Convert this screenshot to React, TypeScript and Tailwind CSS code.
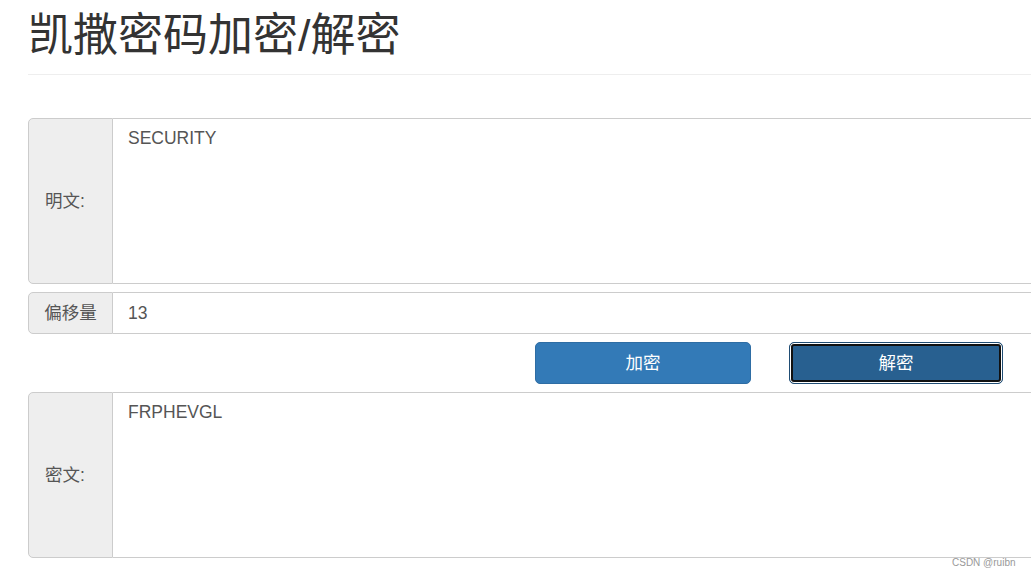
import React from "react";

const font = { fontFamily: '"Liberation Sans", "Noto Sans CJK SC", sans-serif' };

function TextGroup({ label, value }: { label: string; value: string }) {
  return (
    <div className="flex h-[166px] w-full">
      <div className="flex w-[85px] shrink-0 items-center rounded-l-[5px] border border-[#ccc] bg-[#eee] pl-[16px] text-[17.5px] text-[#555]">
        {label}
      </div>
      <textarea
        readOnly
        defaultValue={value}
        className="h-full flex-1 resize-none border border-l-0 border-[#ccc] bg-white px-[15px] pt-[9px] text-[17.5px] leading-[1.2] text-[#555] outline-none"
        style={font}
      />
    </div>
  );
}

export default function App() {
  return (
    <div className="relative h-[575px] w-[1031px] overflow-hidden bg-white" style={font}>
      <div className="ml-[28px] w-[1012px]">
        <div className="mt-[8px] border-b border-[#eee] pb-[10px]">
          <h1 className="text-[45px] leading-[1.25] text-[#333]">凯撒密码加密/解密</h1>
        </div>

        <div className="mt-[43px] flex flex-col gap-[8px]">
          <TextGroup label="明文:" value="SECURITY" />

          <div className="flex h-[42px] w-full">
            <div className="flex w-[85px] shrink-0 items-center justify-center rounded-l-[5px] border border-[#ccc] bg-[#eee] text-[17.5px] text-[#555]">
              偏移量
            </div>
            <input
              readOnly
              defaultValue="13"
              className="h-full flex-1 border border-l-0 border-[#ccc] bg-white px-[15px] text-[17.5px] text-[#555] outline-none"
              style={font}
            />
          </div>

          <div className="flex h-[42px] pl-[507px]">
            <button className="h-full w-[216px] rounded-[5px] border border-[#2e6da4] bg-[#337ab7] text-[17.5px] text-white">
              加密
            </button>
            <button className="ml-[38px] h-full w-[214px] rounded-[5px] border border-[#204d74] bg-[#286090] text-[17.5px] text-white shadow-[inset_0_0_0_1px_#fff,inset_0_0_0_3px_#111]">
              解密
            </button>
          </div>

          <TextGroup label="密文:" value="FRPHEVGL" />
        </div>
      </div>

      <div className="absolute left-[952px] top-[555px] text-[10px] text-[#999]">CSDN @ruibn</div>
    </div>
  );
}
